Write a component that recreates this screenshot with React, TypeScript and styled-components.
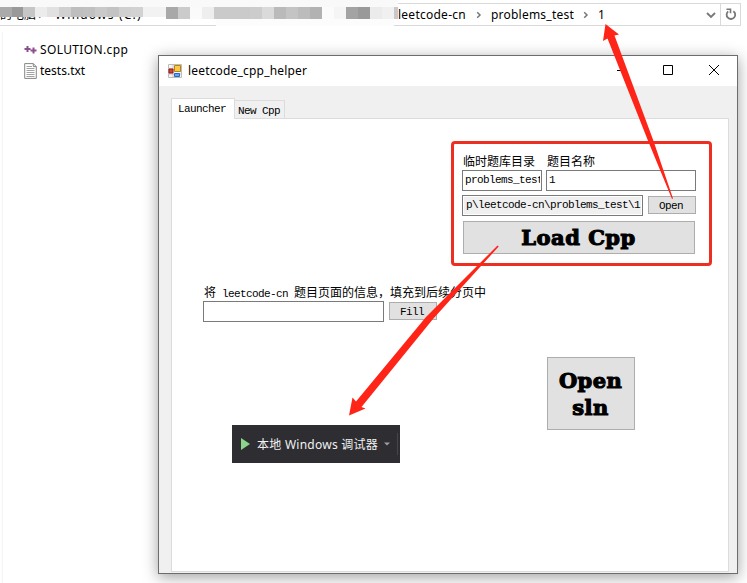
import React from "react";
import styled, { createGlobalStyle } from "styled-components";

const GlobalStyle = createGlobalStyle`
  * { box-sizing: border-box; }
  html, body { margin: 0; padding: 0; background: #fff; overflow: hidden; }
`;

const uiFont = `"Noto Sans", "Noto Sans CJK SC", sans-serif`;
const monoFont = `"Liberation Mono", "Noto Sans CJK SC", monospace`;

const Desktop = styled.div`
  position: relative;
  width: 747px;
  height: 583px;
  overflow: hidden;
  background: #fff;
  color: #000;
  font-family: ${uiFont};
`;

const AddressBar = styled.header`
  display: flex;
  align-items: center;
  width: 741px;
  height: 23px;
  margin-top: 3px;
  border: 1px solid #d9d9d9;
  border-left: 0;
  font-size: 12px;
`;

const Crumb = styled.span<{ $w: number; $spacing?: number }>`
  width: ${(p) => p.$w}px;
  line-height: 20px;
  white-space: nowrap;
  letter-spacing: ${(p) => p.$spacing ?? 0}px;
`;

const BarSpacer = styled.div`
  flex: 1;
`;

const Separator = styled.svg<{ $gap: number }>`
  flex: none;
  margin-right: ${(p) => p.$gap}px;
`;

const RefreshBox = styled.div`
  display: flex;
  align-items: center;
  justify-content: center;
  width: 20px;
  height: 21px;
  margin-left: 4px;
  border-left: 1px solid #d9d9d9;
`;

const Mosaic = styled.div`
  position: absolute;
  left: 0;
  top: 0;
  display: flex;
  width: 398px;
  height: 17px;
  padding-top: 7px;
  background: #f9f9f9;
`;

const MosaicTail = styled.div`
  position: absolute;
  left: 216px;
  top: 19px;
  width: 178px;
  height: 7px;
  background: #fcfcfc;
`;

const Cell = styled.i<{ $w: number; $c: string }>`
  width: ${(p) => p.$w}px;
  height: 12px;
  flex: none;
  background: ${(p) => p.$c};
`;

const LeftCells = styled.div`
  display: flex;
  height: 10px;
  overflow: hidden;
`;

const RightCells = styled.div`
  display: flex;
  height: 12px;
`;

const FilePane = styled.main`
  display: flex;
  flex-direction: column;
  width: 156px;
  height: 551px;
  margin: 6px 0 0 2px;
  padding: 7px 0 0 21px;
  border-left: 1px solid #f5f5f5;
`;

const FileRow = styled.div<{ $spacing: number }>`
  display: flex;
  align-items: center;
  height: 21px;
  gap: 3px;
  font-size: 12px;
  letter-spacing: ${(p) => p.$spacing}px;
`;

const Window = styled.section`
  position: absolute;
  left: 158px;
  top: 55px;
  width: 580px;
  height: 519px;
  display: flex;
  flex-direction: column;
  border: 1px solid #6c6c6c;
  background: #f0f0f0;
  box-shadow: 0 3px 14px rgba(0, 0, 0, 0.38);
`;

const TitleBar = styled.div`
  display: flex;
  align-items: center;
  height: 30px;
  padding: 0 0 1px 9px;
  background: #fff;
  font-size: 12px;
`;

const Title = styled.span`
  flex: 1;
  margin-left: 6px;
  line-height: 20px;
  letter-spacing: 0.18px;
`;

const Caption = styled.svg`
  flex: none;
  width: 46px;
  height: 29px;
`;

const Tabs = styled.nav`
  display: flex;
  align-items: flex-end;
  height: 32px;
  padding-left: 12px;
`;

const Tab = styled.div<{ $active?: boolean }>`
  position: relative;
  z-index: ${(p) => (p.$active ? 1 : 0)};
  width: ${(p) => (p.$active ? 64 : 51)}px;
  height: ${(p) => (p.$active ? 21 : 18)}px;
  margin: 0 0 ${(p) => (p.$active ? -1 : 0)}px ${(p) => (p.$active ? 0 : -1)}px;
  padding: ${(p) => (p.$active ? "4px 0 0 6px" : "4px 0 0 3px")};
  border: 1px solid #dcdcdc;
  border-bottom: 0;
  background: ${(p) => (p.$active ? "#fff" : "#f0f0f0")};
  font: 11px/13px ${monoFont};
  letter-spacing: -0.6px;
  white-space: pre;
`;

const Page = styled.div`
  width: 558px;
  height: 454px;
  margin-left: 12px;
  padding: 35px 0 0 31px;
  border: 1px solid #dcdcdc;
  background: #fff;
`;

const LoadGroup = styled.div`
  display: grid;
  grid-template-columns: 80px 150px;
  grid-template-rows: 16px 21px 22px 33px;
  column-gap: 4px;
  width: 234px;
  margin-left: 259px;
`;

const Label = styled.label`
  display: block;
  height: 16px;
  padding: 2px 0 0 1px;
  font: 12px/15px ${monoFont};
  white-space: pre;
`;

const Latin = styled.span`
  font-size: 11px;
  letter-spacing: -0.6px;
`;

const Field = styled.div<{ $w: number; $disabled?: boolean }>`
  width: ${(p) => p.$w}px;
  height: 21px;
  padding: 2px 1px 0 2px;
  border: 1px solid #7a7a7a;
  background: ${(p) => (p.$disabled ? "#f0f0f0" : "#fff")};
  box-shadow: ${(p) => (p.$disabled ? "inset 0 0 0 1px #fff" : "none")};
  font: 11px/15px ${monoFont};
  letter-spacing: -0.6px;
  white-space: nowrap;
`;

const PathField = styled(Field)`
  padding-left: 3px;
`;

const Clip = styled.div`
  overflow: hidden;
`;

const PathRow = styled.div`
  grid-column: 1 / 3;
  display: flex;
  align-items: flex-start;
  gap: 5px;
  padding-top: 4px;
`;

const Button = styled.button<{ $w: number; $h: number }>`
  display: block;
  width: ${(p) => p.$w}px;
  height: ${(p) => p.$h}px;
  margin: 0;
  padding: 2px 0 0;
  border: 1px solid #adadad;
  background: #e1e1e1;
  color: #000;
  font: 11px/14px ${monoFont};
  letter-spacing: -0.6px;
`;

const SmallButton = styled(Button)`
  margin-top: 1px;
  padding-right: 2px;
`;

const DisplayButton = styled(Button)<{ $spacing: number }>`
  padding: 0 1px 0 0;
  font: 900 21px/27px "DejaVu Serif", serif;
  letter-spacing: ${(p) => p.$spacing}px;
  -webkit-text-stroke: 1.1px #000;
`;

const LoadSlot = styled.div`
  grid-column: 1 / 3;
  padding: 8px 0 0 1px;
`;

const FillGroup = styled.div`
  margin-top: 39px;
`;

const FillRow = styled.div`
  display: flex;
  align-items: flex-start;
  gap: 5px;
`;

const SlnSlot = styled.div`
  padding: 35px 0 0 344px;
`;

const DebugToolbar = styled.div`
  position: absolute;
  left: 232px;
  top: 425px;
  display: flex;
  align-items: center;
  width: 168px;
  height: 38px;
  padding: 0 2px 0 9px;
  background: #2d2d32;
  color: #f1f1f1;
  font-size: 12px;
  white-space: nowrap;
`;

const DebugText = styled.span`
  width: 127px;
  margin-left: 7px;
  padding-top: 1px;
  line-height: 20px;
  letter-spacing: 0.26px;
`;

const ToolDivider = styled.i`
  width: 1px;
  height: 22px;
  margin-left: auto;
  background: #46464a;
`;

const Highlight = styled.div`
  position: absolute;
  left: 451px;
  top: 141px;
  width: 261px;
  height: 125px;
  border: 3px solid #ed2f22;
  border-radius: 4px;
`;

const Arrows = styled.svg`
  position: absolute;
  left: 0;
  top: 0;
  pointer-events: none;
`;

const leftCells: [number, string][] = [
  [12, "#aaaaaa"], [11, "#999999"], [12, "#c6c6c6"], [12, "#ececec"], [12, "#e1e1e1"],
  [12, "#d0d0d0"], [12, "#bebebe"], [12, "#c0c0c0"], [12, "#c9c9c9"], [12, "#c3c3c3"],
  [12, "#d0d0d0"], [12, "#d2d2d2"], [24, "#f2f2f2"],
];

const rightCells: [number, string][] = [
  [12, "#a8a8a8"], [12, "#cbcbcb"], [12, "#fafafa"], [12, "#eeeeee"], [36, "#cacaca"],
  [12, "#cccccc"], [12, "#dadada"], [12, "#bababa"], [12, "#c4c4c4"], [12, "#bcbcbc"],
  [12, "#b2b2b2"], [12, "#fbfbfb"], [12, "#f5f5f5"], [12, "#a3a3a3"], [12, "#999999"],
  [12, "#ebebeb"], [12, "#f0f0f0"], [4, "#c8c8c8"],
];

const Chevron = ({ gap }: { gap: number }) => (
  <Separator $gap={gap} width="6" height="8" viewBox="0 0 6 8">
    <path d="M1.2 1.2 4 4 1.2 6.8" fill="none" stroke="#777" strokeWidth="1.5" />
  </Separator>
);

const CppIcon = () => (
  <svg width="13" height="16" viewBox="0 0 13 16">
    <path d="M3.5 4v6M.5 7h6M9.5 5.5v6M6.5 8.5h6" stroke="#8b4f8f" strokeWidth="2" fill="none" />
  </svg>
);

const TextIcon = () => (
  <svg width="13" height="16" viewBox="0 0 13 16">
    <path d="M.7.6h8.6l3 3v11.8H.7z" fill="#fff" stroke="#858585" />
    <path d="M9.3.6v3h3" fill="none" stroke="#858585" />
    <path d="M2.5 3.5H8M2.5 5.5h8M2.5 7.5h8M2.5 9.5h8M2.5 11.5h8M2.5 13.5h8" stroke="#999" strokeWidth=".9" />
  </svg>
);

const FormIcon = () => (
  <svg width="14" height="14" viewBox="0 0 14 14">
    <path d="M.5.5h13v13H.5z" fill="#f4f4f4" stroke="#bcbcbc" />
    <path d="M5 1v12M1 5h5M1 10h12" stroke="#c6c6c6" />
    <path d="M6.5 1.5h6v6h-6z" fill="#f7cb45" stroke="#b98312" />
    <path d="M1 5h4v4H1z" fill="#d64534" stroke="#8e1710" />
    <path d="M6.5 9.5h5v3h-5z" fill="#6aa4ef" stroke="#2f65c3" />
  </svg>
);

export default function App() {
  return (
    <Desktop>
      <GlobalStyle />
      <AddressBar>
        <Crumb $w={38}>的电脑</Crumb>
        <Chevron gap={11} />
        <Crumb $w={343} $spacing={1.2}>Windows (C:)</Crumb>
        <Crumb $w={78} $spacing={0.25}>leetcode-cn</Crumb>
        <Chevron gap={9} />
        <Crumb $w={92} $spacing={0.22}>problems_test</Crumb>
        <Chevron gap={9} />
        <Crumb $w={8}>1</Crumb>
        <BarSpacer />
        <svg width="10" height="8" viewBox="0 0 10 8">
          <path d="m1 2 4 4 4-4" fill="none" stroke="#777" strokeWidth="1.8" />
        </svg>
        <RefreshBox>
          <svg width="12" height="13" viewBox="0 0 12 13">
            <path d="M8.4 3.2A4.3 4.3 0 1 1 3.2 3.4" fill="none" stroke="#777" strokeWidth="1.8" />
            <path d="M1.5 1.3h4v4" fill="none" stroke="#777" strokeWidth="1.6" />
          </svg>
        </RefreshBox>
      </AddressBar>
      <Mosaic>
        <LeftCells>
          {leftCells.map(([w, c], i) => (
            <Cell key={i} $w={w} $c={c} />
          ))}
        </LeftCells>
        <RightCells>
          {rightCells.map(([w, c], i) => (
            <Cell key={i} $w={w} $c={c} />
          ))}
        </RightCells>
      </Mosaic>
      <MosaicTail />

      <FilePane>
        <FileRow $spacing={0.36}>
          <CppIcon />
          SOLUTION.cpp
        </FileRow>
        <FileRow $spacing={0}>
          <TextIcon />
          tests.txt
        </FileRow>
      </FilePane>

      <Window>
        <TitleBar>
          <FormIcon />
          <Title>leetcode_cpp_helper</Title>
          <Caption viewBox="0 0 46 29">
            <path d="M18 14.5h10" stroke="#000" />
          </Caption>
          <Caption viewBox="0 0 46 29">
            <path d="M18.5 9.5h9v9h-9z" fill="none" stroke="#000" />
          </Caption>
          <Caption viewBox="0 0 46 29">
            <path d="m18 9 10 10M28 9 18 19" fill="none" stroke="#000" />
          </Caption>
        </TitleBar>
        <Tabs>
          <Tab $active>Launcher</Tab>
          <Tab>New Cpp</Tab>
        </Tabs>
        <Page>
          <LoadGroup>
            <Label>临时题库目录</Label>
            <Label>题目名称</Label>
            <Field $w={80}>
              <Clip>problems_test</Clip>
            </Field>
            <Field $w={150}>1</Field>
            <PathRow>
              <PathField $w={181} $disabled>p\leetcode-cn\problems_test\1</PathField>
              <SmallButton $w={48} $h={18}>Open</SmallButton>
            </PathRow>
            <LoadSlot>
              <DisplayButton $w={232} $h={33} $spacing={0.5}>Load Cpp</DisplayButton>
            </LoadSlot>
          </LoadGroup>
          <FillGroup>
            <Label>
              将<Latin> leetcode-cn </Latin>题目页面的信息，填充到后续分页中
            </Label>
            <FillRow>
              <Field $w={181} />
              <SmallButton $w={48} $h={18}>Fill</SmallButton>
            </FillRow>
          </FillGroup>
          <SlnSlot>
            <DisplayButton $w={88} $h={73} $spacing={0.4}>
              Open
              <br />
              sln
            </DisplayButton>
          </SlnSlot>
        </Page>
      </Window>

      <DebugToolbar>
        <svg width="9" height="12" viewBox="0 0 9 12">
          <path d="M0 0v12l9-6z" fill="#8bd48a" />
        </svg>
        <DebugText>本地 Windows 调试器</DebugText>
        <svg width="6" height="4" viewBox="0 0 6 4">
          <path d="M0 .5h6l-3 3z" fill="#a0a0a3" />
        </svg>
        <ToolDivider />
      </DebugToolbar>

      <Highlight />
      <Arrows width="747" height="583" viewBox="0 0 747 583">
        <path d="M605.5 24 619 34.5 614.5 35.5 653.5 141 673 198.5 672 199 648.5 142 607.5 38.5 603 41z" fill="#ff2418" />
        <path d="M349 415.5 352.5 397.5 356 401.5 426 317 497.5 245.5 498.7 246.5 433 319 361.5 407 365.5 408.5z" fill="#ff2418" />
      </Arrows>
    </Desktop>
  );
}
